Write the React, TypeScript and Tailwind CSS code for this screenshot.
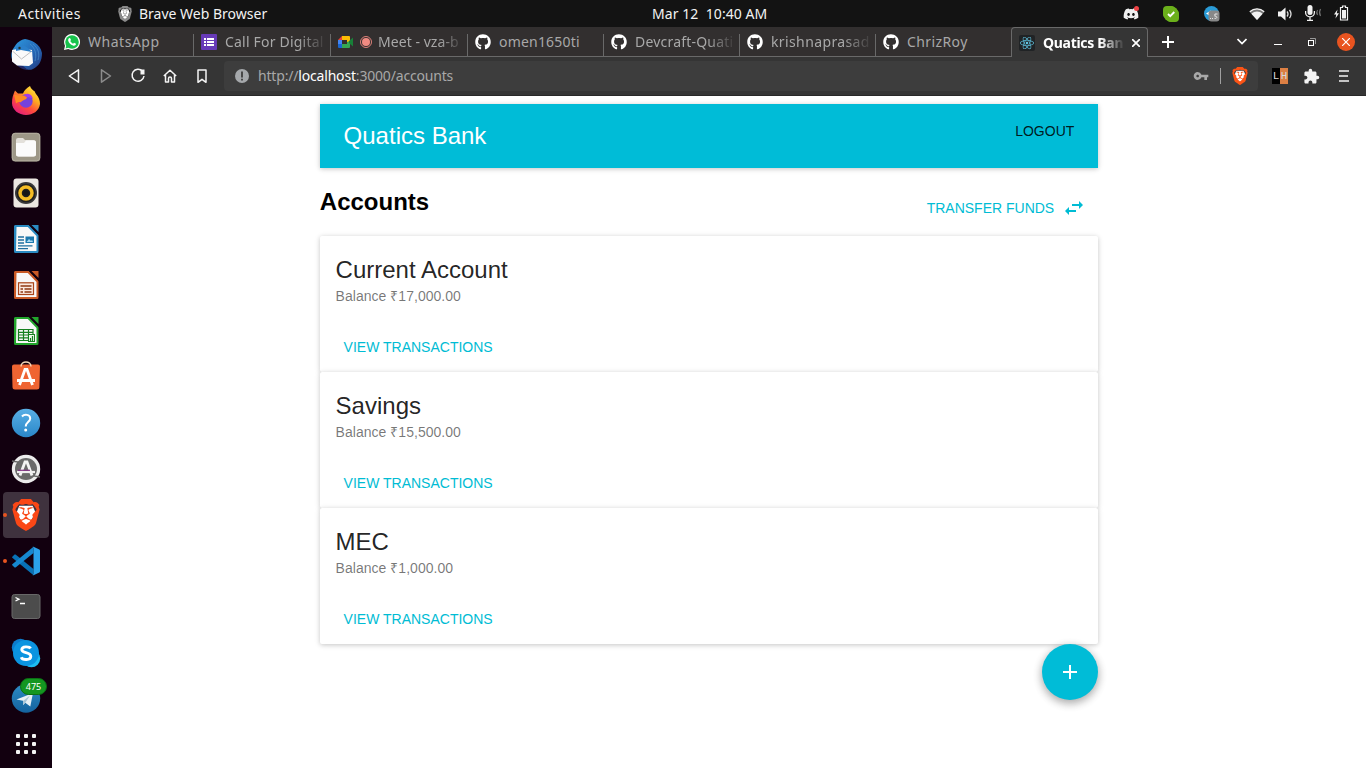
import React from "react";
import type { ReactNode } from "react";
import { FaGithub, FaReact, FaDiscord } from "react-icons/fa";
import { SiBrave } from "react-icons/si";
import { MdExtension, MdVpnKey, MdAdd } from "react-icons/md";

const UI = "font-['Noto_Sans',sans-serif]";

function Art({ children, label }: { children: ReactNode; label: string }) {
  return (
    <svg viewBox="0 0 32 32" className="h-8 w-8" role="img" aria-label={label}>
      {children}
    </svg>
  );
}

function BraveLogo({ size, shield, lion }: { size: number; shield: string; lion: string }) {
  return (
    <svg width={size} height={size} viewBox="0 0 24 24">
      <path d="M7 5h10l2 5-4 8-3 2.500-3-2.500-4-8z" fill={lion} />
      <SiBrave size={24} color={shield} />
    </svg>
  );
}

function LibreOffice({ color, label, children }: { color: string; label: string; children: ReactNode }) {
  return (
    <Art label={label}>
      <path d="M6 2h13L28.500 12v16.500a1.500 1.500 0 0 1-1.500 1.500H5.500A1.500 1.500 0 0 1 4 28.500V3.500A1.500 1.500 0 0 1 6 2z" fill={color} />
      <path d="M6.500 4h11.300L26.500 13V27.500a.5.500 0 0 1-.5.500H6.500a.5.500 0 0 1-.5-.5z" fill="#f8f8f8" />
      <path d="M18.300 1.500H29v11z" fill="#12000f" />
      <path d="M21.500 2H28.500v7z" fill={color} />
      {children}
    </Art>
  );
}

const dock: { id: string; art: ReactNode; active?: boolean; running?: boolean; badge?: string }[] = [
  {
    id: "mail",
    art: (
      <Art label="Thunderbird">
        <defs>
          <linearGradient id="tb" x1="0" y1="0" x2="1" y2="1">
            <stop offset="0" stopColor="#2f9ce0" />
            <stop offset=".55" stopColor="#2469b8" />
            <stop offset="1" stopColor="#233a80" />
          </linearGradient>
        </defs>
        <path d="M5 7C8 2 13 .5 15 0c6 1 15 4 17 14 0 8-3 13-9 16-2 1-4 1-6 .5L4 24C-.5 18 1 12 5 7z" fill="url(#tb)" />
        <path d="M7 24l6 3 5 4c-6-.5-11-3-14-9z" fill="#202a68" />
        <path d="M2 11l9-1.500L22 11l1 13-4 3-12-.5-5-4z" fill="#fafafa" />
        <path d="M2.500 12l9 8L22 12" fill="none" stroke="#b8b8b8" strokeWidth=".9" />
        <path d="M6 9c4-4 9-3 13 1l3 3-11-2-5 1z" fill="#2b80cb" />
        <circle cx="9.500" cy="9" r="1.200" fill="#27332c" />
        <path d="M23 5c5 4 7 9 5 16M20 5c5 4 7 10 5 17" fill="none" stroke="#4c91cd" strokeWidth=".7" />
      </Art>
    ),
  },
  {
    id: "firefox",
    art: (
      <Art label="Firefox">
        <defs>
          <linearGradient id="ff" x1=".9" y1="0" x2=".2" y2="1">
            <stop offset="0" stopColor="#fff04d" />
            <stop offset=".35" stopColor="#ffb01f" />
            <stop offset=".65" stopColor="#ff4a3d" />
            <stop offset="1" stopColor="#e01a83" />
          </linearGradient>
        </defs>
        <path d="M20 1c1 3 3 4 4 5 1 0 1 2 2 3 3 3 4 7 4 10-1 7-7 11-14 11S2 25 2 18C2 13 3 10 5 5.500l3 3h5c1-3 4-6 7-7.500z" fill="url(#ff)" />
        <circle cx="16" cy="16" r="6.700" fill="#7542dd" />
        <path d="M14 10c5-3 8 0 9 4-3-2-5-2-7-1z" fill="#a23bea" />
        <path d="M4 9.500c3 1 6 1 10 1l3 2c-1 3-5 2-6 5-2-1-4 0-5 1z" fill="#ff8a22" />
      </Art>
    ),
  },
  {
    id: "files",
    art: (
      <Art label="Files">
        <rect x="1.700" y="1.800" width="28.600" height="28.600" rx="3.500" fill="#9d9787" />
        <rect x="2.300" y="2.400" width="27.400" height="27.400" rx="3" fill="none" stroke="#b2ad9e" />
        <path d="M6 9a2 2 0 0 1 2-2h5l2 2h8.500A2.500 2.500 0 0 1 26 11.500V23a2.500 2.500 0 0 1-2.500 2.500h-15A2.500 2.500 0 0 1 6 23z" fill="#e3e0da" />
        <path d="M6 12h8l2-2.500h8a2 2 0 0 1 2 2V23a2.500 2.500 0 0 1-2.500 2.500h-15A2.500 2.500 0 0 1 6 23z" fill="#fbfbfb" />
      </Art>
    ),
  },
  {
    id: "music",
    art: (
      <Art label="Rhythmbox">
        <rect x="3.500" y="1.500" width="25" height="29" rx="3" fill="#ece8e2" />
        <circle cx="16" cy="16" r="11" fill="#3a3a3a" />
        <circle cx="16" cy="16" r="9.300" fill="#1f1f1f" />
        <circle cx="16" cy="16" r="6" fill="none" stroke="#f5bd25" strokeWidth="3.500" />
        <circle cx="16" cy="16" r="2.800" fill="#171717" />
      </Art>
    ),
  },
  {
    id: "writer",
    art: (
      <LibreOffice color="#2a8bc2" label="LibreOffice Writer">
        <path d="M8 14h6M8 17h6M8 20h6M8 22.800h14.500M8 25.600h10" stroke="#1f6f9f" strokeWidth="1.300" />
        <rect x="15.500" y="13.500" width="8.500" height="6.500" fill="#1c78ad" />
        <path d="M16.500 19l2.500-3 2 2 1-1 1 2z" fill="#a9d8f0" />
      </LibreOffice>
    ),
  },
  {
    id: "impress",
    art: (
      <LibreOffice color="#c95a26" label="LibreOffice Impress">
        <rect x="8.500" y="13.800" width="15" height="11.700" fill="#fbe9df" stroke="#a94418" strokeWidth="1.200" />
        <path d="M10.500 17h11M10.500 20h2.500M14.500 20h7M10.500 23h2.500M14.500 23h7" stroke="#8f3712" strokeWidth="1.600" />
      </LibreOffice>
    ),
  },
  {
    id: "calc",
    art: (
      <LibreOffice color="#22a52c" label="LibreOffice Calc">
        <path d="M8.500 14.500h14.500v11H8.500zM8.500 17.300h14.500M8.500 20h14.500M8.500 22.800h14.500M13.500 14.500v11M18.500 14.500v11" fill="none" stroke="#168020" strokeWidth="1.200" />
        <rect x="18.500" y="19.500" width="6" height="7" fill="#eafbea" stroke="#168020" />
        <path d="M20.500 26v-3M22.500 26v-5" stroke="#168020" strokeWidth="1.200" />
      </LibreOffice>
    ),
  },
  {
    id: "software",
    art: (
      <Art label="Ubuntu Software">
        <path d="M4 3.500h24a2 2 0 0 1 2 2l-.6 20.500a2.500 2.500 0 0 1-2.500 2.500H5A2.500 2.500 0 0 1 2.500 26L2 5.500a2 2 0 0 1 2-2z" fill="#ef6432" />
        <path d="M11 5.500c0-6 10-6 10 0" fill="none" stroke="#f3d8b9" strokeWidth="1.400" />
        <path d="M9.500 24L15 8.500h2L22.500 24M7 19.500h18" fill="none" stroke="#fff" strokeWidth="2.800" />
      </Art>
    ),
  },
  {
    id: "help",
    art: (
      <Art label="Help">
        <defs>
          <linearGradient id="hp" x1="0" y1="0" x2="0" y2="1">
            <stop offset="0" stopColor="#59afe5" />
            <stop offset="1" stopColor="#2a87c9" />
          </linearGradient>
        </defs>
        <circle cx="16" cy="16" r="14.200" fill="url(#hp)" />
        <path d="M12 9.500c2.200-2.600 8.200-2.400 8.200 2 0 3.500-4.500 3.800-4.500 8" fill="none" stroke="#fff" strokeWidth="2" />
        <circle cx="15.700" cy="23" r="1.500" fill="#fff" />
      </Art>
    ),
  },
  {
    id: "updater",
    art: (
      <Art label="Software Updater">
        <circle cx="16" cy="16" r="14.200" fill="#ececec" />
        <circle cx="16" cy="16" r="11" fill="#6a6a6a" />
        <path d="M2 8l6 1-1 4M30 24l-6-1 1-4" fill="none" stroke="#666" strokeWidth="1.400" />
        <path d="M10 22.500L15 9h2l5 13.500" fill="none" stroke="#f4f4f4" strokeWidth="2.800" />
        <path d="M7 19h18" stroke="#eee" strokeWidth="2.200" />
        <path d="M8 17.300h12" stroke="#823284" strokeWidth="1.200" />
      </Art>
    ),
  },
  { id: "brave", active: true, running: true, art: <BraveLogo size={32} shield="#fa4716" lion="#fff" /> },
  {
    id: "code",
    running: true,
    art: (
      <Art label="Visual Studio Code">
        <path d="M2.300 11.700l2-1.900c.5-.4 1.100-.4 1.600 0L23.500 24v6.200L2.300 12.800a.8.800 0 0 1 0-1.100z" fill="#0872b7" />
        <path d="M2.300 20.300l2 1.900c.5.400 1.100.4 1.600 0L23.500 8V1.800L2.300 19.200a.8.800 0 0 0 0 1.100z" fill="#1688d0" />
        <path d="M22 2l1.500-.3 5.800 2.800c.5.300.7.700.7 1.300v20.400c0 .6-.2 1-.7 1.300l-5.800 2.800L22 30c.8.200 1.500-.3 1.500-1.200V3.200C23.500 2.300 22.800 1.800 22 2z" fill="#2ba2ea" />
      </Art>
    ),
  },
  {
    id: "terminal",
    art: (
      <Art label="Terminal">
        <rect x="2" y="3.500" width="28" height="24" rx="2.500" fill="#4c4c4c" stroke="#686868" />
        <path d="M5.500 6.500l3.500 1.700L5.500 10M10 12.500h5" fill="none" stroke="#fff" strokeWidth="1.300" />
      </Art>
    ),
  },
  {
    id: "skype",
    art: (
      <Art label="Skype">
        <circle cx="10.500" cy="10.500" r="8.700" fill="#0c7ccc" />
        <circle cx="21.500" cy="21.500" r="8.700" fill="#1dbcf2" />
        <circle cx="16" cy="16" r="13" fill="#0b94e0" />
        <path d="M20.500 11.500c-1-2-8.700-2.700-8.700 1.300 0 3.700 9 2 9 6.500 0 4.300-8.500 4-9.500 1" fill="none" stroke="#fff" strokeWidth="2.900" />
      </Art>
    ),
  },
  {
    id: "telegram",
    badge: "475",
    art: (
      <Art label="Telegram">
        <defs>
          <linearGradient id="tg" x1="0" y1="0" x2="0" y2="1">
            <stop offset="0" stopColor="#2d8cc4" />
            <stop offset="1" stopColor="#14629e" />
          </linearGradient>
        </defs>
        <circle cx="16" cy="15.500" r="14.200" fill="url(#tg)" />
        <path d="M6.500 16.500L23 10l-2.700 13.500-5-3.700L13 22v-4.200l-6.500-1.300z" fill="#e9f1f6" />
        <path d="M13 18l7-5.500-4.700 7.300L13 22z" fill="#a9c6d8" />
      </Art>
    ),
  },
  {
    id: "apps",
    art: (
      <Art label="Show Applications">
        {[5, 13, 21].map((y) =>
          [6, 14, 22].map((x) => <rect key={`${x}-${y}`} x={x} y={y} width="4" height="4" rx="1" fill="#f3f3f3" />)
        )}
      </Art>
    ),
  },
];

function Dock() {
  return (
    <aside className="flex w-[52px] shrink-0 flex-col items-center bg-[#12000f] pt-[5px]">
      {dock.map((d) => (
        <div key={d.id} className={`relative flex h-[46px] w-[46px] shrink-0 items-center justify-center rounded ${d.active ? "bg-[#3f323e]" : ""}`}>
          {d.running && <span className="absolute top-[21px] left-0 h-1 w-1 rounded-full bg-[#e95420]" />}
          {d.art}
          {d.badge && (
            <span className={`absolute top-[2px] left-[17px] flex h-[17px] w-[27px] items-center justify-center rounded-full border border-[#0b6e14] bg-[#149621] text-[9px] leading-none text-white ${UI}`}>
              {d.badge}
            </span>
          )}
        </div>
      ))}
    </aside>
  );
}

function TopBar() {
  return (
    <div className={`relative flex h-[27px] shrink-0 items-center bg-[#131313] text-[14px] text-[#f2f2f2] ${UI}`}>
      <span className="ml-[18px] w-[99px] tracking-[0.45px]">Activities</span>
      <BraveLogo size={16} shield="#8b8b8b" lion="#fff" />
      <span className="ml-[6px]">Brave Web Browser</span>
      <span className="absolute left-[652px] whitespace-pre tracking-[0.06px]">Mar 12  10:40 AM</span>
      <div className="ml-auto flex items-center">
        <div className="relative mr-6 flex">
          <FaDiscord size={16} color="#f0f0f0" />
          <span className="absolute top-0 right-0 h-[5px] w-[5px] rounded-full bg-[#ed4245]" />
        </div>
        <svg width="16" height="16" viewBox="0 0 16 16" className="mr-[25px]">
          <rect width="12" height="12" rx="4" fill="#6bb01b" />
          <rect x="4" y="4" width="12" height="12" rx="4" fill="#6bb01b" />
          <circle cx="8" cy="8" r="7.700" fill="#6bb01b" />
          <path d="M5 8l2.200 2.200L11.300 6" stroke="#fff" strokeWidth="1.800" fill="none" />
        </svg>
        <svg width="16" height="16" viewBox="0 0 16 16" className="mr-[29px]">
          <circle cx="7.500" cy="7.500" r="7.500" fill="#2a9bd6" />
          <path d="M2 7.500l5-3v6z" fill="#fff" />
          <rect x="4.500" y="4.500" width="11" height="11" rx="3" fill="#888" />
          <path d="M6 12.500h1M8 12.500h1M10.500 12.300c3 .8 3-2.600.4-2V8h2.600" stroke="#eee" strokeWidth=".9" fill="none" />
        </svg>
        <svg width="16" height="12" viewBox="0 0 16 12" className="mr-[13px]">
          <path d="M.5 3.800C5-.4 11-.4 15.500 3.800L8 12z" fill="#777" />
          <path d="M2.400 5.700c3.500-3 7.700-3 11.200 0L8 12z" fill="#f2f2f2" />
          <path d="M.8 3.700C5-.1 11-.1 15.200 3.700" stroke="#f2f2f2" strokeWidth="1.200" fill="none" />
        </svg>
        <svg width="15" height="14" viewBox="0 0 15 14" className="mr-3">
          <path d="M0 4.500h3L7.500.5v13L3 9.500H0z" fill="#f2f2f2" />
          <path d="M9 4.500q2 2.500 0 5M11.500 2.800q3 4.200 0 8.400" stroke="#ddd" strokeWidth="1.300" fill="none" />
        </svg>
        <svg width="17" height="16" viewBox="0 0 17 16" className="-mt-px mr-[12px]">
          <rect x="2.500" y="0" width="5" height="10" rx="2.500" fill="#f2f2f2" />
          <path d="M.6 6v1.500a4.400 4.400 0 0 0 8.800 0V6M5 12v3M2 15.300h6" stroke="#f2f2f2" strokeWidth="1.300" fill="none" />
          <path d="M12.500 5q-1.500 2.500 0 5M15.500 4q-2 3.500 0 7" stroke="#777" strokeWidth="1.100" fill="none" />
        </svg>
        <svg width="15" height="16" viewBox="0 0 15 16" className="-mt-px mr-[17px]">
          <path d="M3.500 4.500L0 9.500h2.200L1.500 13.500 5 8.200H2.800z" fill="#f2f2f2" />
          <path d="M6.500 2.500h2V1h3v1.500h2v12.500h-7z" fill="none" stroke="#f2f2f2" strokeWidth="1.200" />
          <rect x="8" y="5" width="4" height="8.500" fill="#f2f2f2" />
        </svg>
      </div>
    </div>
  );
}

const tabs: { title: string; icon: ReactNode; box: string; fade?: boolean; track: string }[] = [
  {
    title: "WhatsApp",
    box: "w-[138px] pl-2",
    track: "tracking-[0.52px]",
    icon: (
      <svg width="16" height="16" viewBox="0 0 16 16">
        <path d="M0 16l1-4.300A8 8 0 1 1 4.300 15z" fill="#fff" />
        <circle cx="8" cy="8" r="6.800" fill="#17c34c" />
        <path d="M1.600 14.400l.9-3.600 2.700 2.700z" fill="#17c34c" />
        <path d="M5 4.200l1-.1 1 2-.7 1c.8 1.400 1.500 2 2.800 2.600l.9-1 2 1c-.2 1.800-1.700 2.300-3 1.800C6.600 10.600 5 9 4.300 7c-.3-1 0-2.200.7-2.800z" fill="#fff" />
      </svg>
    ),
  },
  {
    title: "Call For Digital",
    box: "w-[137px] pl-[7px]",
    fade: true,
    track: "tracking-[0.2px]",
    icon: (
      <svg width="16" height="16" viewBox="0 0 16 16">
        <rect width="16" height="16" rx="1" fill="#673ab7" />
        <path d="M3 5h2M6 5h7M3 8h2M6 8h7M3 11h2M6 11h7" stroke="#fff" strokeWidth="1.800" />
      </svg>
    ),
  },
  {
    title: "Meet - vza-b",
    box: "w-[137px] pl-[7px]",
    fade: true,
    track: "tracking-[0.05px]",
    icon: (
      <span className="flex items-center gap-1.5">
        <svg width="16" height="16" viewBox="0 0 16 16">
          <path d="M0 6l4-4v4z" fill="#ea4335" />
          <path d="M4 2h7a1 1 0 0 1 1 1v4L9 9V6H4z" fill="#fbbc04" />
          <path d="M0 6h4v4H0z" fill="#4285f4" />
          <path d="M0 10h4v4H1a1 1 0 0 1-1-1z" fill="#1967d2" />
          <path d="M4 10h5V8l3-1v6a1 1 0 0 1-1 1H4z" fill="#34a853" />
          <path d="M11 7l4-3.500v9L11 9z" fill="#188038" />
        </svg>
        <svg width="12" height="12" viewBox="0 0 12 12">
          <circle cx="6" cy="6" r="5.500" fill="none" stroke="#f28b82" strokeWidth=".9" />
          <circle cx="6" cy="6" r="4" fill="#f28b82" />
        </svg>
      </span>
    ),
  },
  { title: "omen1650ti", box: "w-[136px] pl-[7px]", track: "tracking-[0.2px]", icon: <FaGithub size={16} color="#fff" /> },
  { title: "Devcraft-Quati", box: "w-[136px] pl-[7px]", fade: true, track: "tracking-[0.2px]", icon: <FaGithub size={16} color="#fff" /> },
  { title: "krishnaprasad", box: "w-[136px] pl-[7px]", fade: true, track: "tracking-[0.38px]", icon: <FaGithub size={16} color="#fff" /> },
  { title: "ChrizRoy", box: "w-[135px] pl-[7px]", track: "tracking-[0.4px]", icon: <FaGithub size={16} color="#fff" /> },
];

const fadeMask = "[mask-image:linear-gradient(to_right,black_72%,transparent_102%)]";

function TabStrip() {
  return (
    <div className={`flex h-[30px] items-stretch bg-[#322f2f] text-[14px] ${UI}`}>
      <div className="flex border-b border-[#696969] pl-1">
        {tabs.map((t, i) => (
          <div key={t.title} className={`flex shrink-0 items-center ${t.box}`}>
            <span className="flex shrink-0">{t.icon}</span>
            <span className={`${i === 2 ? "ml-1.5" : "ml-2"} min-w-0 flex-1 overflow-hidden whitespace-nowrap text-[#a8a8a8] ${t.track} ${t.fade ? fadeMask : ""}`}>
              {t.title}
            </span>
            <span className={`ml-1 h-[22px] w-px self-end ${i < 6 ? "bg-[#696969]" : ""}`} />
          </div>
        ))}
      </div>
      <div className="flex w-[137px] shrink-0 items-center rounded-t-[4px] border border-b-0 border-[#696969] bg-[#353535] pl-[7px]">
        <span className="flex h-4 w-4 shrink-0 items-center justify-center rounded-[2px] bg-[#202325]">
          <FaReact size={14} color="#61c8e6" />
        </span>
        <span className={`ml-2 w-[80px] overflow-hidden whitespace-nowrap font-bold tracking-[-0.3px] text-white ${fadeMask}`}>Quatics Ban</span>
        <svg width="8" height="8" viewBox="0 0 8 8" className="ml-[9px]">
          <path d="M0 0l8 8M8 0L0 8" stroke="#fff" strokeWidth="1.700" />
        </svg>
      </div>
      <div className="flex flex-1 items-center border-b border-[#696969]">
        <svg width="12" height="12" viewBox="0 0 12 12" className="ml-[14px]">
          <path d="M6 0v12M0 6h12" stroke="#fff" strokeWidth="2" />
        </svg>
        <svg width="10" height="7" viewBox="0 0 10 7" className="ml-[63px]">
          <path d="M.5 1L5 5.500 9.500 1" stroke="#fff" strokeWidth="1.700" fill="none" />
        </svg>
        <span className="mt-[5px] ml-[27px] h-px w-2 bg-white" />
        <svg width="8" height="8" viewBox="0 0 8 8" className="ml-[26px]">
          <path d="M2 .5h5.500V6" stroke="#999" fill="none" />
          <rect x=".5" y="2.500" width="5" height="5" fill="none" stroke="#fff" />
        </svg>
        <span className="ml-[21px] flex h-[18px] w-[18px] items-center justify-center rounded-full bg-[#e95420]">
          <svg width="8" height="8" viewBox="0 0 8 8">
            <path d="M0 0l8 8M8 0L0 8" stroke="#fff" strokeWidth="1.200" />
          </svg>
        </span>
      </div>
    </div>
  );
}

function Toolbar() {
  return (
    <div className={`flex h-[39px] items-center border-b border-[#282828] bg-[#353535] ${UI}`}>
      <svg width="144" height="16" viewBox="0 0 144 16" className="ml-[14px]" fill="none" stroke="#f4f4f4" strokeWidth="1.500" strokeLinejoin="round">
        <path d="M12.500 1.800v12.400L3.300 8z" />
        <path d="M35.500 1.800v12.400L44.500 8z" stroke="#8b8b8b" />
        <path d="M76.500 3.200a6 6 0 1 0 1.500 4.800" />
        <path d="M74.500 1.500h4v5h-4z" fill="#f4f4f4" stroke="none" />
        <path d="M97.800 8L104 2.200 110.200 8M99.500 7v7h3v-3.500a1.500 1.500 0 0 1 3 0V14h3V7" />
        <path d="M132 2h8v12.300l-4-3-4 3z" />
      </svg>
      <div className="ml-[14px] flex h-[30px] w-[1034px] items-center rounded bg-[#3d3d3d]">
        <svg width="14" height="14" viewBox="0 0 14 14" className="ml-[11px]">
          <circle cx="7" cy="7" r="7" fill="#a5a8ab" />
          <path d="M7 2.500v6M7 9.700v1.800" stroke="#3d3d3d" strokeWidth="1.800" />
        </svg>
        <span className="-mt-0.5 ml-[9px] text-[14px] tracking-[-0.18px] text-[#a8a8a8]">
          http://<span className="text-white">localhost</span>:3000/accounts
        </span>
        <MdVpnKey size={16} color="#a8a8a8" className="ml-auto" />
        <span className="ml-[11px] h-4 w-px bg-[#a0a0a0]" />
        <span className="mr-[9px] ml-[10px] flex">
          <BraveLogo size={18} shield="#fb5416" lion="#fff" />
        </span>
      </div>
      <span className="ml-[14px] flex h-4 w-4 text-[11px] leading-4 text-[#d8d8d8] font-['Liberation_Mono',monospace]">
        <span className="w-2 bg-black text-center">L</span>
        <span className="w-2 bg-[#dd8044] text-center">H</span>
      </span>
      <MdExtension size={17} color="#f4f4f4" className="ml-[15px]" />
      <svg width="10" height="12" viewBox="0 0 10 12" className="ml-[19px]">
        <path d="M0 1h10M0 6h9M0 11h10" stroke="#f4f4f4" strokeWidth="1.500" />
      </svg>
    </div>
  );
}

const accounts = [
  { name: "Current Account", balance: "₹17,000.00" },
  { name: "Savings", balance: "₹15,500.00" },
  { name: "MEC", balance: "₹1,000.00" },
];

function Page() {
  return (
    <main className="flex flex-1 justify-center bg-white pt-2 font-['Liberation_Sans',sans-serif]">
      <div className="flex w-[778.4px] flex-col">
        <header className="flex h-16 shrink-0 justify-between bg-[#00bcd7] pr-[23.9px] pl-[23.8px] shadow-[0_1px_6px_rgba(0,0,0,0.12),0_1px_4px_rgba(0,0,0,0.12)]">
          <h1 className="text-2xl leading-16 text-white">Quatics Bank</h1>
          <button className="mt-[9px] h-9 text-sm text-black/87">LOGOUT</button>
        </header>
        <div className="flex h-[68px] shrink-0 justify-between">
          <h2 className="mt-5 text-2xl leading-7 font-bold text-black">Accounts</h2>
          <button className="mt-[22px] mr-3 flex h-9 items-center text-sm text-[#00bcd4]">
            TRANSFER FUNDS
            <svg width="24" height="24" viewBox="0 0 24 24" className="ml-2" fill="#00bcd4">
              <path d="M6.990 11L3 15l3.990 4v-3H14v-2H6.990v-3zM21 9l-3.990-4v3H10v2h7.010v3L21 9z" />
            </svg>
          </button>
        </div>
        {accounts.map((a) => (
          <section key={a.name} className="h-[136px] shrink-0 rounded-[2px] bg-white shadow-[0_1px_6px_rgba(0,0,0,0.12),0_1px_4px_rgba(0,0,0,0.12)]">
            <div className="px-[15.8px] py-4">
              <h3 className="text-2xl leading-9 text-black/87">{a.name}</h3>
              <p className="text-sm leading-4 tracking-[0.03px] text-black/54">Balance {a.balance}</p>
            </div>
            <button className="mt-[9px] ml-[23.8px] h-9 text-sm text-[#00bcd4]">VIEW TRANSACTIONS</button>
          </section>
        ))}
        <button className="flex h-14 w-14 shrink-0 items-center justify-center self-end rounded-full bg-[#00bcd7] shadow-[0_3px_10px_rgba(0,0,0,0.16),0_3px_10px_rgba(0,0,0,0.23)]" aria-label="Add account">
          <MdAdd size={24} color="#fff" />
        </button>
      </div>
    </main>
  );
}

export default function App() {
  return (
    <div className="flex h-[768px] w-[1366px] flex-col overflow-hidden">
      <TopBar />
      <div className="flex min-h-0 flex-1">
        <Dock />
        <div className="flex min-w-0 flex-1 flex-col">
          <TabStrip />
          <Toolbar />
          <Page />
        </div>
      </div>
    </div>
  );
}
